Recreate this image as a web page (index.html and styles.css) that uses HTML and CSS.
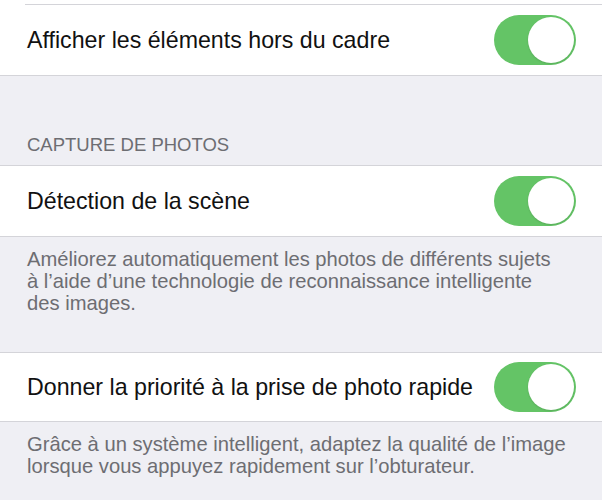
FILE: index.html
```html
<!DOCTYPE html>
<html lang="fr">
<head>
    <meta charset="UTF-8">
    <title>Appareil photo</title>
    <link rel="stylesheet" href="styles.css">
</head>
<body>
    <div class="group">
        <div class="stub"></div>
        <div class="inset-line"></div>
        <div class="row">
            <span class="label">Afficher les éléments hors du cadre</span>
            <div class="toggle on"><div class="knob"></div></div>
        </div>
    </div>

    <div class="section-title">CAPTURE DE PHOTOS</div>

    <div class="group">
        <div class="row">
            <span class="label">Détection de la scène</span>
            <div class="toggle on"><div class="knob"></div></div>
        </div>
    </div>
    <div class="footer">
        Améliorez automatiquement les photos de différents sujets<br>
        à l’aide d’une technologie de reconnaissance intelligente<br>
        des images.
    </div>

    <div class="group">
        <div class="row short">
            <span class="label">Donner la priorité à la prise de photo rapide</span>
            <div class="toggle on"><div class="knob"></div></div>
        </div>
    </div>
    <div class="footer">
        Grâce à un système intelligent, adaptez la qualité de l’image<br>
        lorsque vous appuyez rapidement sur l’obturateur.
    </div>
</body>
</html>
```

FILE: styles.css
```css
body {
    margin: 0;
    background: #efeff4;
    font-family: 'Liberation Sans', Arial, sans-serif;
    color: #000;
}

.group {
    background: #fff;
    border-top: 1px solid #d4d4d9;
    border-bottom: 1px solid #d4d4d9;
}

.group:first-child {
    border-top: none;
}

.stub {
    height: 4px;
}

.inset-line {
    height: 1px;
    margin-left: 25px;
    background: #d4d4d9;
}

.row {
    height: 70px;
    display: flex;
    align-items: center;
    justify-content: space-between;
    padding: 0 26px 0 27px;
}

.row.short {
    height: 68px;
}

.label {
    font-size: 23.2px;
    color: #111;
}

.toggle {
    width: 82px;
    height: 50px;
    border-radius: 25px;
    background: #e5e5ea;
    box-sizing: border-box;
    padding: 2px;
    display: flex;
}

.toggle.on {
    background: #64c466;
    justify-content: flex-end;
}

.knob {
    width: 46px;
    height: 46px;
    border-radius: 50%;
    background: #fff;
    box-shadow: 0 1px 2px rgba(0, 0, 0, 0.12);
}

.section-title {
    padding: 58px 27px 9px;
    font-size: 18.5px;
    line-height: 22px;
    color: #6d6d72;
}

.footer {
    padding: 11px 27px 38px;
    font-size: 20.2px;
    line-height: 22px;
    color: #6d6d72;
}
```
